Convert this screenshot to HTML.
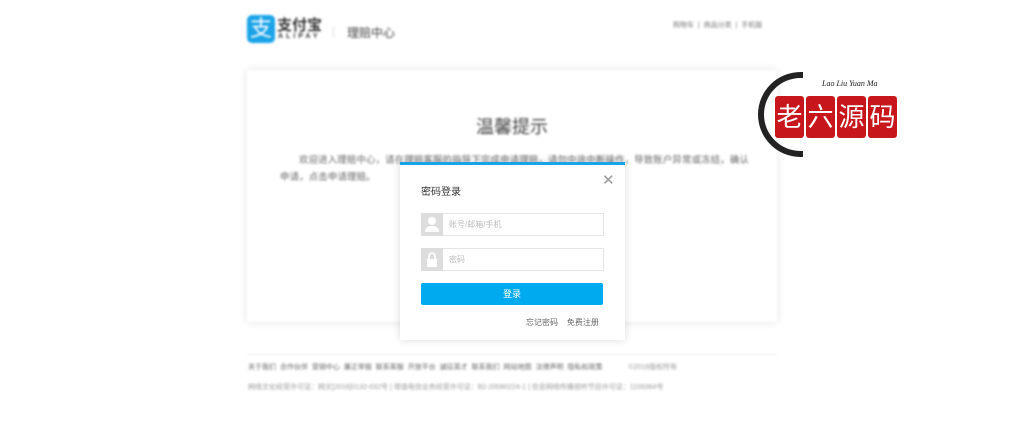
<!DOCTYPE html>
<html><head><meta charset="utf-8"><style>
*{margin:0;padding:0;box-sizing:border-box}
body{width:1024px;height:441px;background:#fff;font-family:"Liberation Sans","Noto Sans CJK SC",sans-serif;position:relative;overflow:hidden}
.bg{position:absolute;left:0;top:0;width:1024px;height:441px;filter:blur(1.1px)}
.a{position:absolute;white-space:nowrap}
</style></head><body>
<div class="bg">
 <div class="a" style="left:247px;top:15px;width:28px;height:28px;background:#1aa3e8;border-radius:5px;color:#fff;font-size:22px;line-height:28px;text-align:center">支</div>
 <div class="a" style="left:277px;top:14px;font-size:15px;font-weight:bold;color:#333">支付宝</div>
 <div class="a" style="left:278px;top:33px;font-size:7px;letter-spacing:3px;color:#333;font-weight:bold">ALIPAY</div>
 <div class="a" style="left:333px;top:26px;width:1px;height:12px;background:#ddd"></div>
 <div class="a" style="left:347px;top:24px;font-size:12px;color:#444">理赔中心</div>
 <div class="a" style="left:673px;top:20px;font-size:7px;color:#777">购物车 &nbsp;|&nbsp; 商品分类 &nbsp;|&nbsp; 手机版</div>
 <div class="a" style="left:247px;top:70px;width:530px;height:252px;background:#fff;box-shadow:0 0 8px rgba(0,0,0,.12)"></div>
 <div class="a" style="left:247px;top:113px;width:530px;text-align:center;font-size:18px;color:#444">温馨提示</div>
 <div class="a" style="left:280px;top:151px;width:472px;white-space:normal;font-size:9.4px;line-height:17px;color:#666;text-indent:19px;letter-spacing:.2px">欢迎进入理赔中心，请在理赔客服的指导下完成申请理赔，请勿中途中断操作，导致账户异常或冻结，确认申请，点击申请理赔。</div>
 <div class="a" style="left:247px;top:354px;width:530px;height:1px;background:#eee"></div>
 <div class="a" style="left:248px;top:362px;font-size:7px;color:#666;word-spacing:2px">关于我们 合作伙伴 营销中心 廉正举报 联系客服 开放平台 诚征英才 联系我们 网站地图 法律声明 隐私权政策 <span style="margin-left:22px;color:#999">©2016版权所有</span></div>
 <div class="a" style="left:248px;top:382px;font-size:7px;color:#999">网络文化经营许可证：网文[2016]0132-032号 | 增值电信业务经营许可证：B2-20080224-1 | 信息网络传播视听节目许可证：1109364号</div>
</div>
<div class="a" style="left:400px;top:162px;width:225px;height:178px;background:#fff;border-top:3px solid #1aa3e8;box-shadow:0 0 8px rgba(0,0,0,.15)"></div>
<div class="a" style="left:421px;top:183px;font-size:10px;color:#333">密码登录</div>
<div class="a" style="left:602px;top:171px;font-size:15px;color:#999">✕</div>
<div class="a" style="left:421px;top:213px;width:183px;height:23px;border:1px solid #e5e5e5"></div>
<div class="a" style="left:421px;top:213px;width:22px;height:23px;background:#ddd"><svg width="22" height="23"><circle cx="11" cy="8" r="4" fill="#fff"/><path d="M4 19q0-6 7-6t7 6z" fill="#fff"/></svg></div>
<div class="a" style="left:449px;top:219px;font-size:8px;color:#bbb">账号/邮箱/手机</div>
<div class="a" style="left:421px;top:248px;width:183px;height:23px;border:1px solid #e5e5e5"></div>
<div class="a" style="left:421px;top:248px;width:22px;height:23px;background:#ddd"><svg width="22" height="23"><path d="M8 11V8a3 3 0 0 1 6 0v3" stroke="#fff" stroke-width="1.6" fill="none"/><rect x="6" y="11" width="10" height="8" fill="#fff"/></svg></div>
<div class="a" style="left:449px;top:254px;font-size:8px;color:#bbb">密码</div>
<div class="a" style="left:421px;top:283px;width:182px;height:22px;background:#00aaee;border-radius:2px;color:#fff;font-size:9px;line-height:22px;text-align:center">登录</div>
<div class="a" style="left:526px;top:317px;font-size:8px;color:#666">忘记密码 &nbsp;&nbsp; 免费注册</div>
<div class="a" style="left:758px;top:72px;width:45px;height:85px;border:6px solid #222;border-right:none;border-radius:45px 0 0 45px"></div>
<div class="a" style="left:822px;top:79px;font-size:8px;font-style:italic;color:#222;font-family:'Liberation Serif',serif">Lao Liu Yuan Ma</div>
<div class="a" style="left:775px;top:96px;width:122px;height:42px;display:flex;gap:2px">
 <div style="flex:1;background:#c8171c;color:#fff;font-size:26px;line-height:42px;text-align:center;border-radius:3px">老</div>
 <div style="flex:1;background:#c8171c;color:#fff;font-size:26px;line-height:42px;text-align:center;border-radius:3px">六</div>
 <div style="flex:1;background:#c8171c;color:#fff;font-size:26px;line-height:42px;text-align:center;border-radius:3px">源</div>
 <div style="flex:1;background:#c8171c;color:#fff;font-size:26px;line-height:42px;text-align:center;border-radius:3px">码</div>
</div>
</body></html>
